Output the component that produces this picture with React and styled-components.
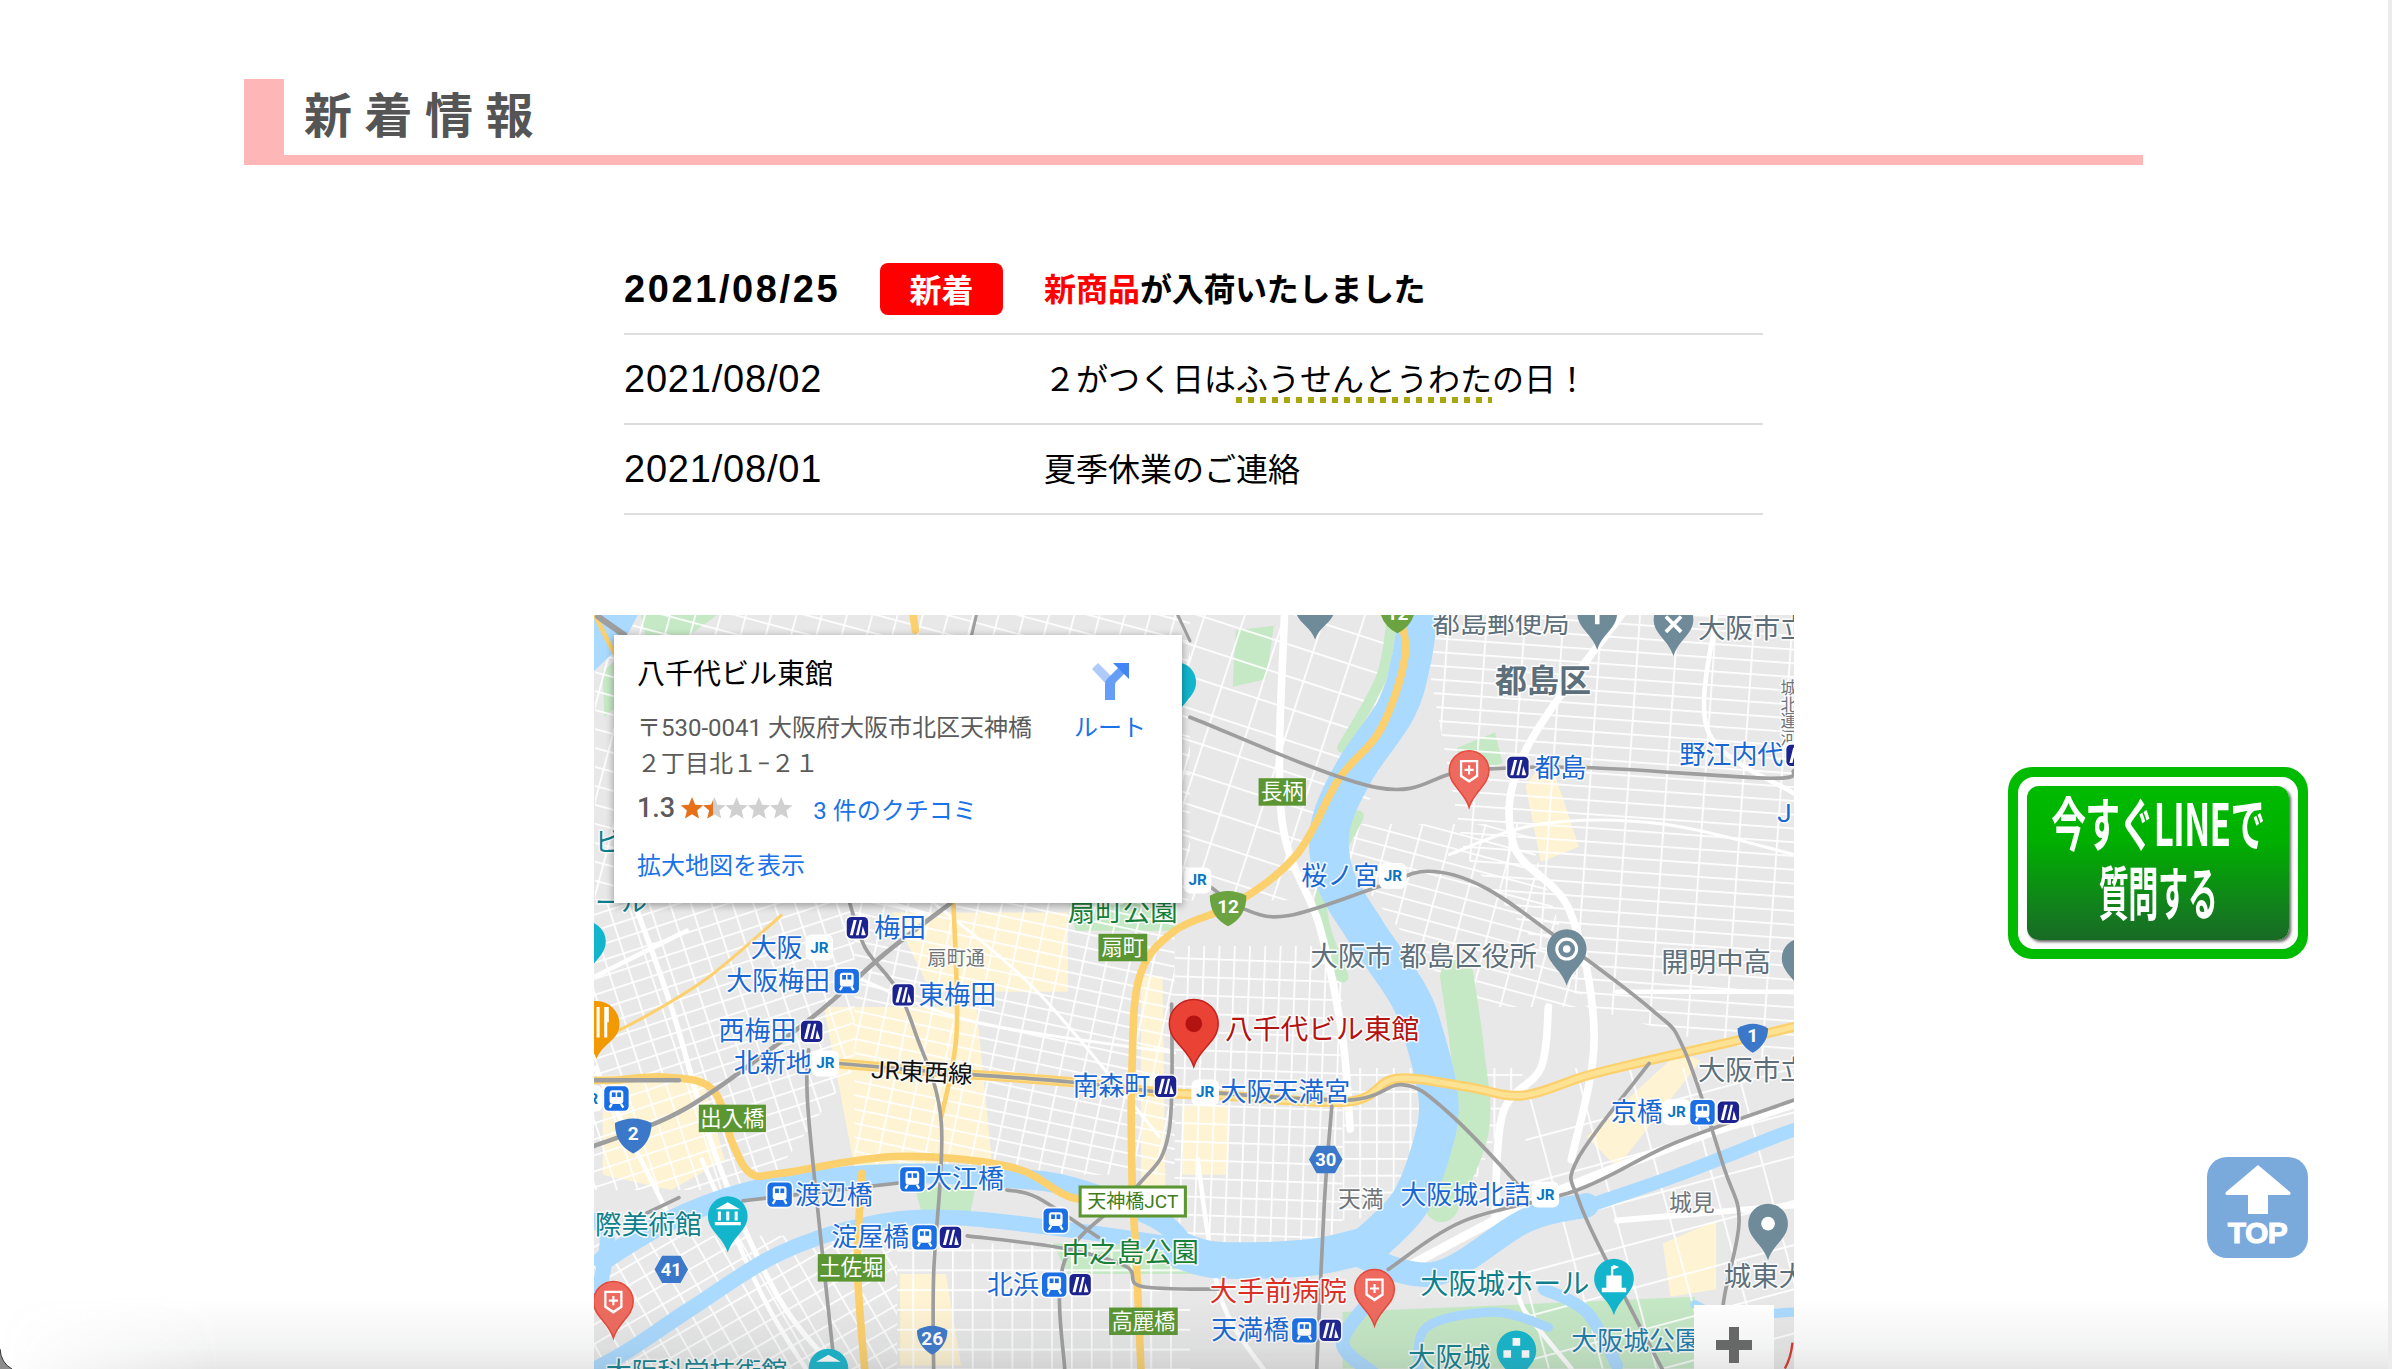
import React from 'react';
import styled, { createGlobalStyle } from 'styled-components';

const Global = createGlobalStyle`
  html, body { margin: 0; padding: 0; background: #fff; }
  #root { height: 1369px; overflow: hidden; position: relative; }
`;
const JP = `"Liberation Sans", "Noto Sans CJK JP", sans-serif`;
const RB = `Roboto, "Noto Sans CJK JP", sans-serif`;

const Page = styled.div`
  width: 2392px; height: 1369px; overflow: hidden; position: relative; background: #fff;
  font-family: ${JP}; color: #000; box-sizing: border-box; padding: 79px 0 0 244px;
`;
const Heading = styled.h2`
  margin: 0; width: 1899px; height: 86px; box-sizing: border-box;
  border-left: 40px solid #ffb6b6; border-bottom: 10px solid #ffb6b6;
  padding: 0 0 0 20px; color: #555; font: 700 48px/76px ${JP}; letter-spacing: 12.500px;
`;
const NewsList = styled.ul`
  list-style: none; margin: 80px 0 0 380px; padding: 0; width: 1139px;
`;
const NewsRow = styled.li`
  display: flex; align-items: center; height: 90px; box-sizing: border-box; border-bottom: 2px solid #ddd;
  font-size: 32px; font-weight: ${p => (p.$top ? 700 : 400)};
`;
const DateCell = styled.span`
  font-size: 38px; letter-spacing: ${p => (p.$top ? '2.600px' : '.800px')}; width: 256px; flex: none;
`;
const DateBox = styled.span`
  width: 420px; flex: none; display: flex; align-items: center;
`;
const Badge = styled.span`
  width: 123px; height: 52px; border-radius: 8px; background: #f00; color: #fff; font-size: 32px; font-weight: 700;
  display: flex; align-items: center; justify-content: center; padding-bottom: 3px; box-sizing: border-box;
`;
const Message = styled.span`
  letter-spacing: ${p => (p.$tight ? '-.3px' : '0')}; margin-bottom: 4px;
`;
const Red = styled.span` color: #f00; letter-spacing: 0; `;
const Dotted = styled.span`
  padding-bottom: 5px;
  background: repeating-linear-gradient(90deg, #a8a60f 0 6px, transparent 6px 12px) left bottom / 100% 6px no-repeat;
`;
const MapFrame = styled.div`
  position: relative; width: 1200px; height: 760px; margin: 100px 0 0 350px; overflow: hidden; background: #e8e8e8;
`;
const MapSvg = styled.svg` display: block; width: 1200px; height: 754px; `;
const InfoWindow = styled.div`
  position: absolute; left: 20px; top: 20px; width: 568px; height: 268px; background: #fff; box-sizing: border-box;
  box-shadow: 0 2px 7px 1px rgba(0,0,0,.3); padding: 20px 23px 0; font-family: ${RB}; display: grid;
  grid-template-columns: 1fr 90px; column-gap: 10px;
`;
const PlaceCol = styled.div` display: flex; flex-direction: column; `;
const PlaceName = styled.div` font-size: 28px; line-height: 40px; color: #000; `;
const Address = styled.div` font-size: 24px; line-height: 36px; color: #5b5b5b; margin-top: 15px; width: 400px; `;
const RatingRow = styled.div` display: flex; align-items: center; height: 36px; margin-top: 8px; `;
const Score = styled.span` font-size: 27px; font-weight: 500; color: #5b5b5b; `;
const Link = styled.a` color: #1a73e8; font-size: 24px; `;
const MoreLink = styled(Link)` margin-top: 22px; line-height: 36px; `;
const RouteCol = styled.div` display: flex; flex-direction: column; align-items: center; padding-top: 8px; margin-left: -8px; color: #1a73e8; font-size: 24px; `;
const RouteLabel = styled.span` margin-top: 10px; line-height: 36px; `;
const ZoomCtl = styled.div`
  position: absolute; left: 1100px; top: 690px; width: 80px; height: 80px; background: #fff; display: flex; justify-content: center; padding-top: 22px; box-sizing: border-box;
`;
const LineBtn = styled.div`
  position: absolute; left: 2008px; top: 767px; width: 300px; height: 192px; box-sizing: border-box; border-radius: 24px;
  background: #00bb00; padding: 10px;
`;
const LineInner = styled.div`
  height: 100%; box-sizing: border-box; background: #fff; border-radius: 16px; padding: 9px;
`;
const LineFace = styled.div`
  height: 100%; border-radius: 12px; box-shadow: 2px 2px 3px #666;
  background: linear-gradient(#00bb00 0%, #00b000 35%, #147a20 85%, #186a24 100%);
  display: flex; flex-direction: column; align-items: center; color: #fff; font-family: "Noto Sans CJK JP", sans-serif; font-weight: 700;
`;
const LineText = styled.div`
  font-size: 58px; line-height: 66px; white-space: nowrap; transform: scaleX(${p => p.$sx});
  transform-origin: center; letter-spacing: -1px; margin-top: ${p => p.$mt}px;
`;
const TopBtn = styled.div`
  position: absolute; left: 2207px; top: 1157px; width: 101px; height: 101px; border-radius: 20px; background: #7aa9dc;
  display: flex; flex-direction: column; align-items: center; color: #fff;
`;
const TopArrow = styled.svg` margin-top: 8px; `;
const TopText = styled.span`
  font: 900 30px/26px ${JP}; margin-top: 5px; letter-spacing: -.5px; -webkit-text-stroke: 1px #fff;
`;
const BottomFade = styled.div`
  position: absolute; left: 0; right: 0; bottom: 0; height: 72px; pointer-events: none;
  background: linear-gradient(rgba(120,125,130,0), rgba(120,125,130,.09) 70%, rgba(110,110,115,.17));
  -webkit-mask-image: linear-gradient(90deg, transparent 0, #000 220px);
`;
const RightEdge = styled.div`
  position: absolute; right: 0; top: 0; bottom: 0; width: 4px; background: #ececec; pointer-events: none;
`;
const Corner = styled.svg` position: absolute; left: 0; bottom: 0; width: 14px; height: 20px; `;
const StarSvg = styled.svg` margin-left: 6px; `;
const ReviewLink = styled(Link)` margin-left: 19px; `;

const T = styled.text`
  font-family: ${RB}; font-size: ${p => p.$s || 17}px; font-weight: ${p => p.$b ? 700 : 400};
  fill: ${p => p.$c}; stroke: #fff; stroke-width: 2px; paint-order: stroke; stroke-linejoin: round;
  dominant-baseline: central; stroke-opacity: .85; writing-mode: ${p => p.$v ? 'vertical-rl' : 'horizontal-tb'};
`;
const BoxText = styled.text`
  font-family: ${RB}; font-size: ${p => p.$s || 13}px; fill: ${p => p.$c || '#fff'}; text-anchor: middle; dominant-baseline: central;
  font-weight: ${p => p.$b ? 700 : 400};
`;

const smooth = pts => {
  let d = `M${pts[0][0]} ${pts[0][1]}`;
  for (let i = 0; i < pts.length - 1; i++) {
    const p0 = pts[i - 1] || pts[i], p1 = pts[i], p2 = pts[i + 1], p3 = pts[i + 2] || p2;
    const k = 0.17;
    d += ` C${(p1[0] + (p2[0] - p0[0]) * k).toFixed(1)} ${(p1[1] + (p2[1] - p0[1]) * k).toFixed(1)} ${(p2[0] - (p3[0] - p1[0]) * k).toFixed(1)} ${(p2[1] - (p3[1] - p1[1]) * k).toFixed(1)} ${p2[0]} ${p2[1]}`;
  }
  return d;
};
const Stroke = ({ pts, c, w }) => <path d={smooth(pts)} fill="none" stroke={c} strokeWidth={w} strokeLinecap="round" strokeLinejoin="round" />;

const W = '#aadaff', G = '#c5e8c5', Y = '#fcd06c', YL = '#fde293', R = '#9e9e9e';

const water = [
  [[[930, 400], [925, 433], [915, 465], [888, 505], [872, 542], [875, 575], [895, 610], [922, 650], [933, 677], [943, 721], [938, 754], [923, 790], [895, 818]], 26],
  [[[900, 815], [860, 824], [800, 826], [775, 820]], 24],
  [[[780, 822], [760, 800], [703, 778], [660, 772], [600, 769], [545, 772], [487, 782], [437, 801], [395, 826]], 13],
  [[[765, 815], [700, 806], [625, 798], [570, 802], [510, 822], [454, 857], [412, 885], [385, 900]], 10],
  [[[1039, 791], [1100, 770], [1169, 743], [1180, 740]], 9],
  [[[884, 820], [940, 835], [1000, 800], [1040, 790]], 16],
  [[[900, 850], [880, 880], [900, 900]], 9],
  [[[1012, 845], [1040, 860], [1060, 895]], 8],
  [[[930, 900], [935, 870], [980, 860], [1015, 870]], 6],
  [[[390, 800], [398, 812], [392, 850]], 10],
  [[[1111, 855], [1130, 862], [1176, 860]], 6],
];
const parks = [
  [[[955, 640], [962, 690], [965, 740], [945, 790]], 22],
  [[[890, 535], [866, 590], [880, 640]], 8],
  [[[912, 410], [905, 445], [880, 490]], 7],
  [[[905, 615], [935, 660]], 8],
];
const highways = [
  [[[916, 400], [921, 430], [905, 478], [878, 510], [850, 560], [810, 592], [770, 610], [747, 640], [742, 700], [742, 770], [745, 830], [748, 900]], 5],
  [[[742, 785], [703, 785], [663, 765], [587, 758], [512, 769], [492, 769], [480, 749], [467, 714], [437, 706], [402, 708], [388, 708]], 5],
  [[[565, 769], [562, 830], [567, 900]], 5],
  [[[390, 683], [425, 665], [465, 640], [512, 600]], 2],
  [[[625, 592], [627, 677], [617, 732]], 3],
  [[[390, 403], [404, 430], [418, 445]], 3],
  [[[598, 400], [600, 413]], 5],
];
const tozai = [[550, 697], [620, 703], [700, 709], [762, 716], [800, 718], [884, 722], [915, 707], [960, 712], [998, 718], [1040, 705], [1081, 695], [1130, 684], [1180, 672]];
const rails = [
  [[[780, 470], [902, 516], [961, 505], [1039, 503], [1160, 510], [1176, 505]], 2.4],
  [[[557, 592], [567, 621], [587, 647], [600, 677], [617, 736], [612, 834], [612, 900]], 2.4],
  [[[530, 688], [530, 732], [547, 896]], 2.4],
  [[[387, 752], [452, 725], [532, 667], [580, 625], [623, 592]], 3],
  [[[392, 404], [409, 416]], 4],
  [[[550, 697], [620, 703], [700, 709], [762, 716]], 2.4],
  [[[792, 716], [884, 721], [920, 711], [948, 728], [992, 773], [1000, 785]], 2.4],
  [[[793, 581], [816, 596], [845, 600], [904, 581], [936, 571], [972, 581], [1016, 611], [1083, 662], [1104, 688], [1130, 765], [1140, 800], [1130, 852], [1125, 900]], 2.4],
  [[[1081, 697], [1034, 760], [1035, 787], [1060, 840], [1091, 900]], 2.4],
  [[[910, 832], [960, 800], [1034, 780], [1098, 749], [1176, 721]], 2.4],
  [[[873, 725], [868, 790], [863, 900]], 2.4],
  [[[634, 810], [696, 818], [738, 830], [748, 843], [800, 845]], 2.4],
  [[[660, 780], [680, 785], [720, 811]], 2.4],
  [[[768, 658], [766, 743], [745, 778], [698, 826], [698, 900]], 2.4],
  [[[487, 787], [592, 775]], 2.4],
  [[[424, 795], [445, 785]], 2.4],
  [[[388, 708], [445, 708]], 3],
  [[[772, 403], [780, 420]], 2],
  [[[640, 403], [636, 420]], 2],
];
const roads = [
  [[[842, 400], [840, 535], [865, 607], [880, 680], [885, 740]], 5],
  [[[1065, 400], [1000, 492], [992, 553], [1029, 597], [1045, 680], [1030, 760]], 5],
  [[[905, 840], [1000, 790], [1100, 750], [1180, 722]], 6],
  [[[1015, 660], [1010, 700], [985, 730], [980, 800]], 5],
  [[[785, 760], [800, 850], [830, 900]], 3],
  [[[1060, 800], [1176, 790]], 4],
  [[[415, 590], [440, 660], [470, 760], [510, 850], [550, 900]], 3.5],
  [[[460, 760], [500, 850], [530, 900]], 3],
  [[[610, 590], [680, 650], [760, 745]], 2],
  [[[390, 700], [440, 800]], 3],
  [[[560, 640], [640, 670], [770, 690]], 2],
  [[[1125, 403], [1120, 480], [1176, 520]], 3],
  [[[950, 560], [1010, 540], [1090, 540], [1176, 560]], 2],
  [[[1060, 650], [1120, 650], [1176, 650]], 3],
  [[[560, 585], [610, 600]], 3],
  [[[390, 640], [450, 610]], 3],
  [[[925, 840], [985, 835], [1000, 860], [1030, 897]], 3],
];

const zones = [
  { id: 'a', pts: '388,590 560,590 560,700 500,780 388,780', w: 13, h: 10, r: -18 },
  { id: 'b', pts: '560,590 770,590 770,770 560,770', w: 15, h: 9, r: 12 },
  { id: 'c', pts: '588,815 780,815 780,900 588,900', w: 13, h: 13, r: 0 },
  { id: 'd', pts: '388,810 588,810 588,900 388,900', w: 13, h: 11, r: -30 },
  { id: 'e', pts: '770,620 880,620 880,830 770,830', w: 10, h: 12, r: 2 },
  { id: 'f', pts: '930,403 1176,403 1176,700 1040,660 960,560', w: 25, h: 9, r: 4 },
  { id: 'g', pts: '775,403 930,403 900,520 860,590 775,590', w: 25, h: 20, r: 18 },
  { id: 'h', pts: '1000,700 1176,700 1176,897 1000,897', w: 34, h: 28, r: -15 },
  { id: 'i', pts: '880,700 1000,700 960,790 880,800', w: 11, h: 11, r: 0 },
  { id: 'j', pts: '860,540 1000,540 1040,660 960,660', w: 20, h: 10, r: 15 },
  { id: 'k', pts: '390,403 780,403 780,590 390,590', w: 16, h: 12, r: 15 },
];
const yellows = [
  '540,660 640,660 650,760 560,765',
  '585,598 700,598 700,650 610,650',
  '395,705 460,705 475,760 440,780 395,770',
  '748,640 762,640 764,790 748,790',
  '775,725 805,725 805,770 775,770',
  '590,835 620,835 630,895 590,895',
  '1000,515 1015,495 1035,555 1010,565',
  '1090,815 1125,800 1125,845 1095,850',
  '1040,745 1100,690 1115,695 1060,765',
];
const greens = [
  '395,440 412,425 425,445 396,470', '420,403 470,403 440,425 425,425',
  '880,860 1111,850 1111,897 880,897', '700,590 770,590 770,610 705,610',
  '600,780 640,775 636,795 605,798', '955,490 980,480 985,500 960,510',
  '690,815 790,815 790,835 700,835', '810,413 835,410 830,445 808,450',
];

const Pin = ({ x, y, r, tip, c, s, children }) => (
  <g>
    <path d={`M${x} ${tip} C${x - r * .25} ${tip - (tip - y) * .45} ${x - r} ${y + r * .75} ${x - r} ${y} A${r} ${r} 0 1 1 ${x + r} ${y} C${x + r} ${y + r * .75} ${x + r * .25} ${tip - (tip - y) * .45} ${x} ${tip}Z`} fill={c} stroke={s || 'none'} strokeWidth="1" />
    {children}
  </g>
);
const Cross = ({ x, y }) => (
  <g>
    <path d={`M${x - 6} ${y - 7}H${x + 6}V${y + 4}L${x} ${y + 8}L${x - 6} ${y + 4}Z`} fill="#fff" />
    <path d={`M${x - 4.5} ${y - 5.5}H${x + 4.5}V${y + 3}L${x} ${y + 6}L${x - 4.5} ${y + 3}Z`} fill="#f0695e" />
    <path d={`M${x - 3} ${y - .5}H${x + 3}M${x} ${y - 3.5}V${y + 2.5}`} stroke="#fff" strokeWidth="1.4" />
  </g>
);
const HospitalPin = ({ x, y, tip }) => <Pin x={x} y={y} r={13} tip={tip} c="#ef6a5e" s="#e5493c"><Cross x={x} y={y} /></Pin>;
const Rail = ({ x, y }) => (
  <g>
    <rect x={x - 9} y={y - 9} width="18" height="18" rx="4" fill="#fff" opacity=".85" />
    <rect x={x - 8} y={y - 8} width="16" height="16" rx="3" fill="#1a6fe4" />
    <rect x={x - 4.5} y={y - 5.5} width="9" height="9" rx="2" fill="#fff" />
    <rect x={x - 3} y={y - 4} width="2.5" height="3" fill="#1a6fe4" />
    <rect x={x + .5} y={y - 4} width="2.5" height="3" fill="#1a6fe4" />
    <path d={`M${x - 3} ${y + 3.5}l-1.5 2.5M${x + 3} ${y + 3.5}l1.5 2.5`} stroke="#fff" strokeWidth="1.5" />
  </g>
);
const Metro = ({ x, y }) => (
  <g>
    <rect x={x - 8} y={y - 8} width="16" height="16" rx="3.5" fill="#fff" opacity=".85" />
    <rect x={x - 7} y={y - 7} width="14" height="14" rx="3" fill="#1c2390" />
    <path d={`M${x - 5} ${y + 5}L${x - 2.5} ${y - 5}H${x - .5}L${x - 3} ${y + 5}Z M${x - 1} ${y + 5}L${x + 1.5} ${y - 5}H${x + 3}L${x + .8} ${y + 5}Z M${x + 2.5} ${y + 5}L${x + 3.5} ${y - 1}L${x + 5.5} ${y + 5}Z`} fill="#fff" />
  </g>
);
const JR = ({ x, y }) => (
  <g>
    <rect x={x - 9} y={y - 8.5} width="18" height="17" rx="4" fill="#fff" />
    <BoxText x={x} y={y} $s={10} $c="#0a76c4" $b>JR</BoxText>
  </g>
);
const GreenBox = ({ x, y, w, h, children, s }) => (
  <g>
    <rect x={x} y={y} width={w} height={h} fill="#5b9632" />
    <BoxText x={x + w / 2} y={y + h / 2} $s={s || 14}>{children}</BoxText>
  </g>
);
const Shield = ({ x, y, t, c = '#3b78c9', r = 12 }) => (
  <g>
    <path d={`M${x - r} ${y - r + 4}Q${x} ${y - r - 2} ${x + r} ${y - r + 4}Q${x + r} ${y + r - 6} ${x} ${y + r}Q${x - r} ${y + r - 6} ${x - r} ${y - r + 4}Z`} fill={c} />
    <BoxText x={x} y={y - 1} $s={12.5} $b>{t}</BoxText>
  </g>
);
const Hex = ({ x, y, t }) => (
  <g>
    <path d={`M${x - 11} ${y}L${x - 6} ${y - 9}H${x + 6}L${x + 11} ${y}L${x + 6} ${y + 9}H${x - 6}Z`} fill="#3b78c9" />
    <BoxText x={x} y={y} $s={12} $b>{t}</BoxText>
  </g>
);

const BLUE = '#1967d2', TEAL = '#0f7f8c', GRN = '#188038', GREY = '#5d6f7a', DGREY = '#70757a';
const labels = [
  ['梅田', 573, 608, BLUE], ['大阪', 492, 621, BLUE], ['大阪梅田', 476, 643, BLUE], ['東梅田', 602, 652, BLUE],
  ['西梅田', 471, 676, BLUE], ['北新地', 481, 697, BLUE], ['南森町', 703, 712, BLUE], ['大阪天満宮', 800, 716, BLUE],
  ['渡辺橋', 521, 783, BLUE], ['大江橋', 607, 773, BLUE], ['淀屋橋', 545, 811, BLUE], ['北浜', 647, 842, BLUE],
  ['天満橋', 794, 872, BLUE], ['桜ノ宮', 853, 574, BLUE], ['都島', 1006, 503, BLUE], ['野江内代', 1101, 495, BLUE],
  ['京橋', 1056, 729, BLUE], ['大阪城北詰', 918, 783, BLUE], ['J', 1165, 533, BLUE],
  ['際美術館', 390, 803, TEAL, 17.5], ['ビ', 390, 552, TEAL], ['ール', 390, 592, TEAL], ['大阪城ホール', 931, 842, TEAL, 18.5],
  ['大阪城', 923, 890, TEAL, 18], ['大阪科学技術館', 397, 899, TEAL], ['大阪城公園', 1030, 879, '#1a7aa8'],
  ['扇町公園', 700, 598, GRN, 18], ['中之島公園', 696, 821, GRN, 18],
  ['都島郵便局', 939, 409, GREY, 18], ['大阪市立', 1113, 412, GREY, 18], ['開明中高', 1089, 631, GREY, 18],
  ['大阪市 都島区役所', 859, 627, GREY, 18], ['大阪市立', 1113, 702, GREY, 18], ['城東大', 1130, 837, GREY, 18],
  ['城見', 1094, 789, DGREY, 15], ['天満', 877, 786, DGREY, 15],
  ['八千代ビル東館', 803, 675, '#b31412', 18.2], ['大手前病院', 793, 847, '#d93025', 18],
];

const App = () => (
  <Page>
    <Global />
    <Heading>新着情報</Heading>
    <NewsList>
      <NewsRow $top>
        <DateBox>
          <DateCell $top>2021/08/25</DateCell>
          <Badge>新着</Badge>
        </DateBox>
        <Message $tight><Red>新商品</Red>が入荷いたしました</Message>
      </NewsRow>
      <NewsRow>
        <DateBox><DateCell>2021/08/02</DateCell></DateBox>
        <Message>２がつく日は<Dotted>ふうせんとうわた</Dotted>の日！</Message>
      </NewsRow>
      <NewsRow>
        <DateBox><DateCell>2021/08/01</DateCell></DateBox>
        <Message>夏季休業のご連絡</Message>
      </NewsRow>
    </NewsList>
    <MapFrame>
      <MapSvg viewBox="389.3 403 786.7 494.3" preserveAspectRatio="none">
        <defs>
          {zones.map(z => (
            <pattern key={z.id} id={`grid-${z.id}`} width={z.w} height={z.h} patternUnits="userSpaceOnUse" patternTransform={`rotate(${z.r})`}>
              <path d={`M0 0H${z.w}M0 0V${z.h}`} stroke="#fff" strokeWidth="2.2" fill="none" />
            </pattern>
          ))}
        </defs>
        <rect x="380" y="395" width="800" height="510" fill="#e8e8e8" />
        {yellows.map((p, i) => <polygon key={i} points={p} fill="#fef3d2" />)}
        {greens.map((p, i) => <polygon key={i} points={p} fill={G} />)}
        {zones.map(z => <polygon key={z.id} points={z.pts} fill={`url(#grid-${z.id})`} />)}
        <polygon points="389,403 418,403 408,422 389,440" fill={W} />
        {parks.map((p, i) => <Stroke key={i} pts={p[0]} c={G} w={p[1]} />)}
        {roads.map((r, i) => <Stroke key={i} pts={r[0]} c="#fff" w={r[1]} />)}
        {water.map((r, i) => <Stroke key={i} pts={r[0]} c={W} w={r[1]} />)}
        {highways.map((r, i) => <Stroke key={i} pts={r[0]} c={Y} w={r[1]} />)}
        <Stroke pts={tozai} c={Y} w={6.5} />
        <Stroke pts={tozai} c={YL} w={3.5} />
        {rails.map((r, i) => <Stroke key={i} pts={r[0]} c={R} w={r[1]} />)}
        <path d="M1170 897Q1174 890 1175 880" fill="none" stroke="#d93025" strokeWidth="1.500" />

        {labels.map(([t, x, y, c, s], i) => <T key={i} x={x} y={y} $c={c} $s={s}>{t}</T>)}
        <T x={980} y={446} $c={GREY} $s={21} $b>都島区</T>
        <T x={608} y={628} $c={DGREY} $s={12.5}>扇町通</T>
        <T x={571} y={701} $c="#111" $s={16} transform="rotate(3 571 701)">JR東西線</T>
        <T x={1172} y={445} $c={DGREY} $s={11} $v>城北運河</T>

        <GreenBox x={825} y={510} w={31} h={18}>長柄</GreenBox>
        <GreenBox x={720} y={612} w={32} h={18}>扇町</GreenBox>
        <GreenBox x={458} y={724} w={44} h={18}>出入橋</GreenBox>
        <GreenBox x={536} y={822} w={44} h={18}>土佐堀</GreenBox>
        <GreenBox x={727} y={857} w={45} h={18}>高麗橋</GreenBox>
        <rect x={708} y={778} width={69} height={19} fill="#fff" stroke="#5b9632" strokeWidth="2" />
        <BoxText x={742.5} y={787.5} $s={12.5} $c="#3f7d20">天神橋JCT</BoxText>

        <Shield x={415} y={744} t="2" />
        <Hex x={440} y={832} t="41" />
        <Shield x={611} y={878} t="26" r={10} />
        <Hex x={869} y={760} t="30" />
        <Shield x={1149} y={680} t="1" r={10} />
        <Shield x={805} y={595} t="12" c="#6aa340" />
        <Shield x={916} y={403} t="12" c="#6aa340" />

        {[[537, 621], [541, 697], [790, 716], [913, 574], [1099, 729], [1013, 783], [785, 577], [386, 720]].map(([x, y], i) => <JR key={i} x={x} y={y} />)}
        {[[555, 643], [404, 720], [511, 783], [598, 773], [606, 811], [691, 842], [692, 800], [855, 872], [1116, 729]].map(([x, y], i) => <Rail key={i} x={x} y={y} />)}
        {[[562, 608], [592, 652], [532, 676], [764, 712], [623, 811], [708, 842], [872, 872], [995, 503], [1133, 729], [1178, 495]].map(([x, y], i) => <Metro key={i} x={x} y={y} />)}

        <HospitalPin x={963} y={505} tip={529} />
        <HospitalPin x={402} y={853} tip={877} />
        <HospitalPin x={901} y={845} tip={869} />
        <Pin x={862} y={398} r={13} tip={419} c="#6f8a99" />
        <Pin x={1047} y={402} r={13} tip={426} c="#6f8a99">
          <path d="M1045.500 403v6h3v-6h4v-3h-4v-3h-3v3h-4v3Z" fill="#fff" />
        </Pin>
        <Pin x={1097} y={406} r={13} tip={430} c="#6f8a99">
          <path d="M1092 404l10 10M1102 404l-10 10" stroke="#fff" strokeWidth="2.500" />
        </Pin>
        <Pin x={1027} y={622} r={13} tip={646} c="#6f8a99">
          <circle cx={1027} cy={622} r={6.5} fill="none" stroke="#fff" strokeWidth="2" />
          <circle cx={1027} cy={622} r={2.5} fill="#fff" />
        </Pin>
        <Pin x={1159} y={802} r={13} tip={826} c="#6f8a99"><circle cx={1159} cy={802} r={4.5} fill="#fff" /></Pin>
        <Pin x={1181} y={628} r={13} tip={652} c="#6f8a99" />
        <Pin x={384} y={617} r={13} tip={641} c="#12b5cb" />
        <Pin x={771} y={447} r={13} tip={471} c="#12b5cb" />
        <Pin x={391} y={671} r={15} tip={694} c="#f29900">
          <path d="M391 660h2v20h-2ZM396 660h3v10h-1v10h-2Z" fill="#fff" />
        </Pin>
        <Pin x={477} y={797} r={13} tip={821} c="#12b5cb">
          <path d="M477 788l8 4.500h-16ZM470.500 794h2v6h-2ZM476 794h2v6h-2ZM481.500 794h2v6h-2ZM468.500 801h17v2h-17Z" fill="#fff" />
        </Pin>
        <Pin x={1058} y={838} r={13} tip={862} c="#12b5cb">
          <path d="M1053 836h10v8h3v3h-16v-3h3ZM1056 830h1.500v6h-1.500ZM1057.500 829l4 1.500-4 1.500Z" fill="#fff" />
        </Pin>
        <Pin x={994} y={885} r={13} tip={909} c="#12b5cb">
          <path d="M991.500 877h5v5h-5ZM985.500 885h5v5h-5ZM997.500 885h5v5h-5Z" fill="#fff" />
        </Pin>
        <Pin x={543} y={897} r={13} tip={921} c="#12b5cb">
          <path d="M543 888l8 4.500h-16Z" fill="#fff" />
        </Pin>
        <Pin x={782.500} y={671} r={16} tip={699} c="#ea4335" s="#c5221f"><circle cx={782.500} cy={671} r={5.500} fill="#b31412" /></Pin>
      </MapSvg>
      <InfoWindow>
        <PlaceCol>
          <PlaceName>八千代ビル東館</PlaceName>
          <Address>〒530-0041 大阪府大阪市北区天神橋２丁目北１−２１</Address>
          <RatingRow>
            <Score>1.3</Score>
            <StarSvg width="113" height="26" viewBox="0 0 113 26">
              <defs><clipPath id="half2"><rect x="20" y="0" width="12" height="26" /></clipPath></defs>
              {[0, 1, 2, 3, 4].map(i => (
                <path key={i} transform={`translate(${i * 22.300} 1)`} d="M11 1l3.200 7.700 8 .6-6.100 5.300 1.900 8L11 18.300 4 22.600l1.900-8L-.2 9.300l8-.6Z" fill={i === 0 ? '#e7711b' : '#d0d0d0'} />
              ))}
              <g clipPath="url(#half2)">
                <path transform="translate(22.300 1)" d="M11 1l3.200 7.700 8 .6-6.100 5.300 1.900 8L11 18.300 4 22.600l1.900-8L-.2 9.300l8-.6Z" fill="#e7711b" />
              </g>
            </StarSvg>
            <ReviewLink>3 件のクチコミ</ReviewLink>
          </RatingRow>
          <MoreLink>拡大地図を表示</MoreLink>
        </PlaceCol>
        <RouteCol>
          <svg width="37" height="37" viewBox="0 0 37 37">
            <path d="M0 6L6 0L21 15L15 22Z" fill="#aecbfa" />
            <path d="M13 37V21q0-3 2-5L27 4l6 6L24 19q-1 1-1 3V37Z" fill="#669df6" />
            <path d="M21 0h16v16Z" fill="#4285f4" />
          </svg>
          <RouteLabel>ルート</RouteLabel>
        </RouteCol>
      </InfoWindow>
      <ZoomCtl>
        <svg width="36" height="36" viewBox="0 0 36 36"><path d="M13 0h10v13h13v10H23v13H13V23H0V13h13Z" fill="#666" /></svg>
      </ZoomCtl>
    </MapFrame>
    <LineBtn>
      <LineInner>
        <LineFace>
          <LineText $sx={0.6} $mt={2}>今すぐLINEで</LineText>
          <LineText $sx={0.52} $mt={3}>質問する</LineText>
        </LineFace>
      </LineInner>
    </LineBtn>
    <TopBtn>
      <TopArrow width="68" height="50" viewBox="0 0 68 50">
        <path d="M34 0L66 27Q68 30 64 30H44V49H24V30H4Q0 30 2 27Z" fill="#fff" />
      </TopArrow>
      <TopText>TOP</TopText>
    </TopBtn>
    <BottomFade />
    <RightEdge />
    <Corner viewBox="0 0 14 20">
      <path d="M0 0Q1 14 12 20H0Z" fill="#8c8c8c" />
      <path d="M0 0Q1 14 12 20" fill="none" stroke="#333" strokeWidth="1" />
    </Corner>
  </Page>
);

export default App;
